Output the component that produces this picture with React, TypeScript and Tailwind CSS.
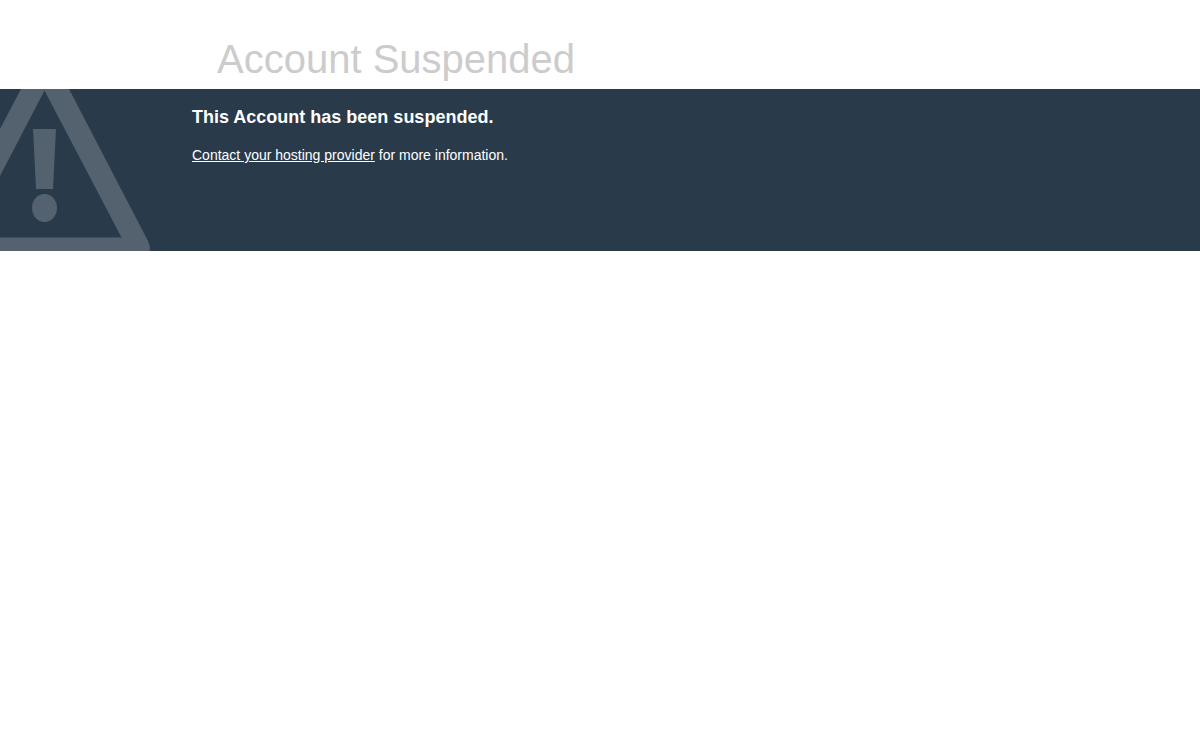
import React from 'react';

const WarningIcon: React.FC = () => (
  <svg className="h-[162px] w-[150px] shrink-0" viewBox="0 0 150 162" fill="#54626f" aria-hidden="true">
    <path
      fillRule="evenodd"
      d="M21 0H69L148 152Q150 156 150 162H0V148.5H121.500L44.500 1.500L0 87V40Z"
    />
    <path d="M33 40H56L53 100H36Z" />
    <ellipse cx="44.500" cy="119" rx="12.500" ry="14" />
  </svg>
);

export default function App() {
  return (
    <div className="min-h-screen bg-white font-['Liberation_Sans',Arial,sans-serif]">
      <header className="pt-8 pb-[3px] pl-[217px]">
        <h1 className="text-[40px] leading-[54px] text-[#cccccc]">Account Suspended</h1>
      </header>
      <main className="flex gap-[42px] bg-[#293a4a] text-white">
        <WarningIcon />
        <section className="pt-4">
          <h2 className="text-lg leading-6 font-bold">This Account has been suspended.</h2>
          <p className="mt-4 text-sm leading-5">
            <a href="#contact" className="underline">Contact your hosting provider</a> for more information.
          </p>
        </section>
      </main>
    </div>
  );
}
